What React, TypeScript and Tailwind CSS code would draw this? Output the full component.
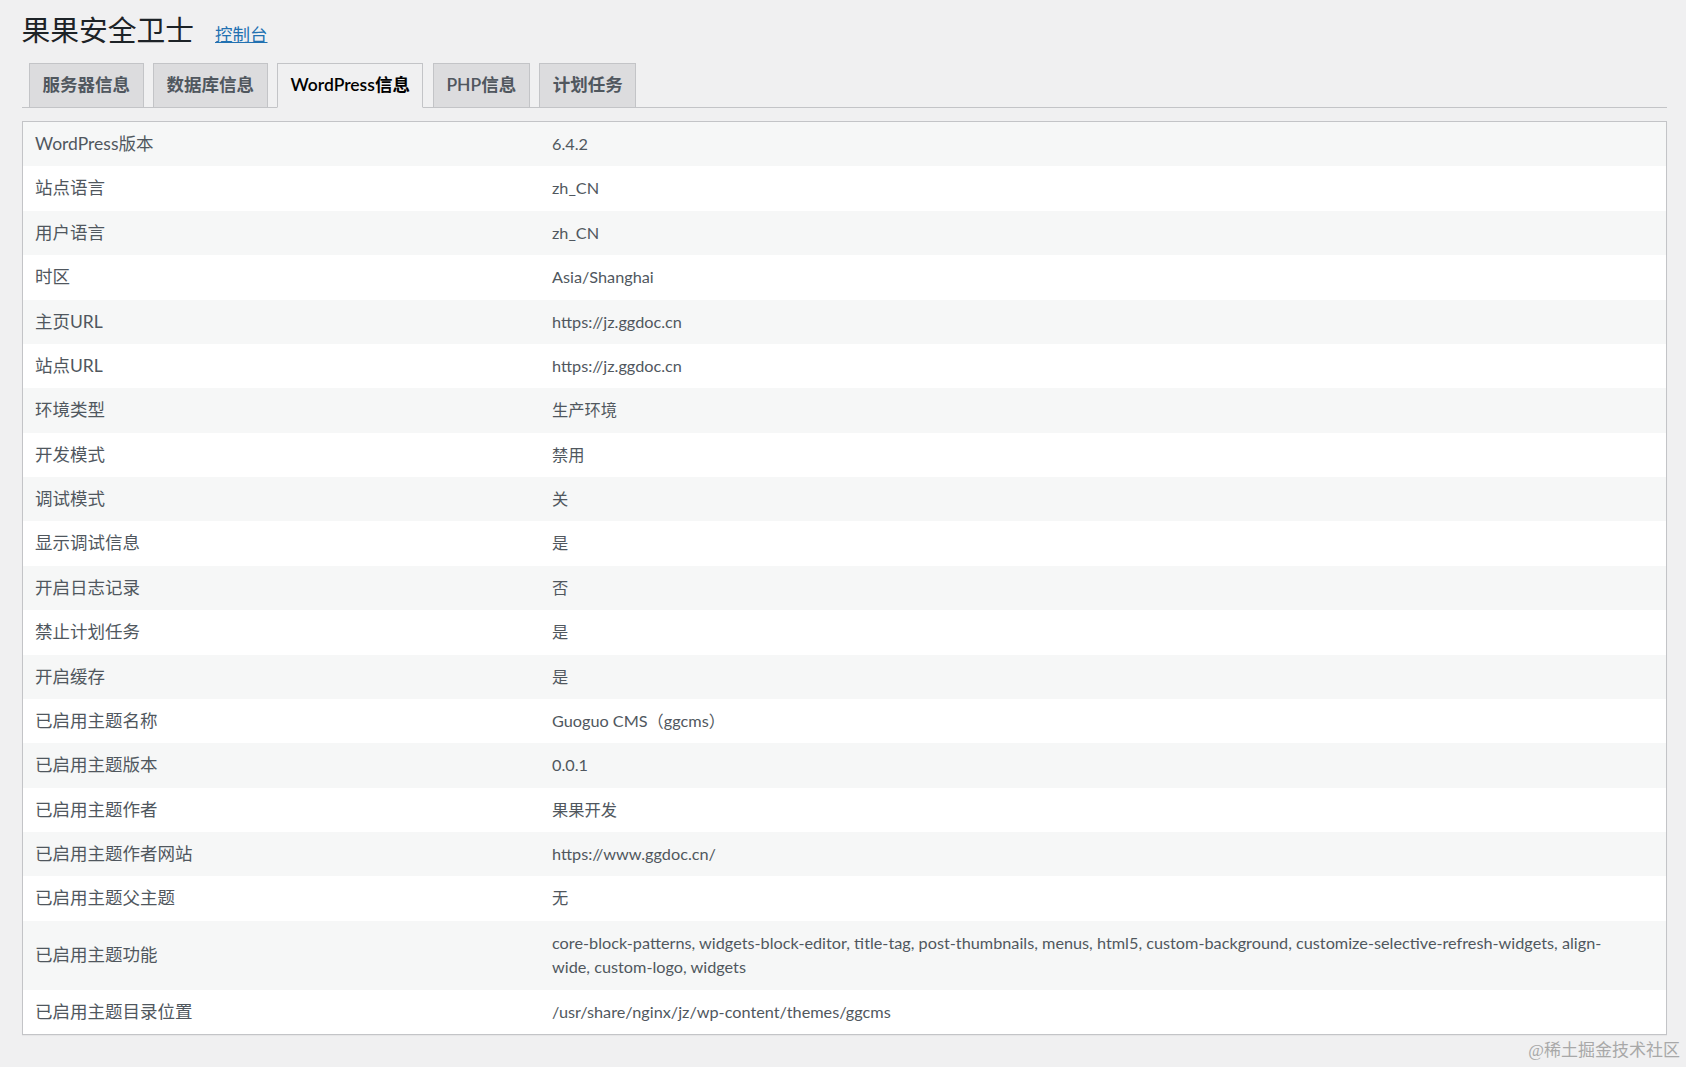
const FONT = { fontFamily: '"Segoe UI", Lato, "Noto Sans CJK SC", sans-serif' }

const tabs = ['服务器信息', '数据库信息', 'WordPress信息', 'PHP信息', '计划任务']

const rows: [string, React.ReactNode][] = [
  ['WordPress版本', '6.4.2'],
  ['站点语言', 'zh_CN'],
  ['用户语言', 'zh_CN'],
  ['时区', 'Asia/Shanghai'],
  ['主页URL', 'https://jz.ggdoc.cn'],
  ['站点URL', 'https://jz.ggdoc.cn'],
  ['环境类型', '生产环境'],
  ['开发模式', '禁用'],
  ['调试模式', '关'],
  ['显示调试信息', '是'],
  ['开启日志记录', '否'],
  ['禁止计划任务', '是'],
  ['开启缓存', '是'],
  ['已启用主题名称', 'Guoguo CMS（ggcms）'],
  ['已启用主题版本', '0.0.1'],
  ['已启用主题作者', '果果开发'],
  ['已启用主题作者网站', 'https://www.ggdoc.cn/'],
  ['已启用主题父主题', '无'],
  [
    '已启用主题功能',
    <>
      core-block-patterns, widgets-block-editor, title-tag, post-thumbnails, menus, html5, custom-background, customize-selective-refresh-widgets, align-
      <br />
      wide, custom-logo, widgets
    </>,
  ],
  ['已启用主题目录位置', '/usr/share/nginx/jz/wp-content/themes/ggcms'],
]

function Tab({ label, active }: { label: string; active: boolean }) {
  return (
    <div
      className={`-mb-px border border-[#c3c4c7] px-[12.5px] py-[6.25px] text-[17.5px] leading-[30px] font-semibold
        ${active ? 'bg-[#f0f0f1] border-b-[#f0f0f1] text-black' : 'bg-[#dcdcde] text-[#50575e]'}`}
    >
      {label}
    </div>
  )
}

export default function App() {
  return (
    <div className="relative min-h-[1067px] bg-[#f0f0f1] pl-[21.5px] pr-[19px] pt-[12px]" style={FONT}>
      <div className="flex items-baseline">
        <h1 className="text-[28.75px] leading-[37px] font-normal text-[#1d2327]">果果安全卫士</h1>
        <a href="#" className="ml-[21px] text-[17.5px] text-[#2271b1] underline">控制台</a>
      </div>

      <div className="mt-[14px] flex gap-[9.5px] border-b border-[#c3c4c7] pl-[7.5px]">
        {tabs.map((t) => (
          <Tab key={t} label={t} active={t === 'WordPress信息'} />
        ))}
      </div>

      <table className="mt-[13.5px] w-full border-separate border-spacing-0 border border-[#c3c4c7] shadow-[0_1px_1px_rgba(0,0,0,0.04)]">
        <tbody>
          {rows.map(([label, value], i) => (
            <tr key={label} className={i % 2 === 0 ? 'bg-[#f6f7f7]' : 'bg-white'}>
              <td className="w-[517px] px-[12.5px] py-[10px] align-middle text-[17.5px] leading-[24.375px] text-[#50575e]">
                {label}
              </td>
              <td className="px-[12.5px] py-[10px] align-middle text-[16.25px] leading-[24.375px] text-[#50575e]">
                {value}
              </td>
            </tr>
          ))}
        </tbody>
      </table>

      <div
        className="absolute right-[6px] bottom-[5px] text-[17px] leading-[22px] text-[#a8a8a8]"
        style={{ fontFamily: '"Liberation Serif", "Noto Sans CJK SC", serif' }}
      >
        @稀土掘金技术社区
      </div>
    </div>
  )
}
